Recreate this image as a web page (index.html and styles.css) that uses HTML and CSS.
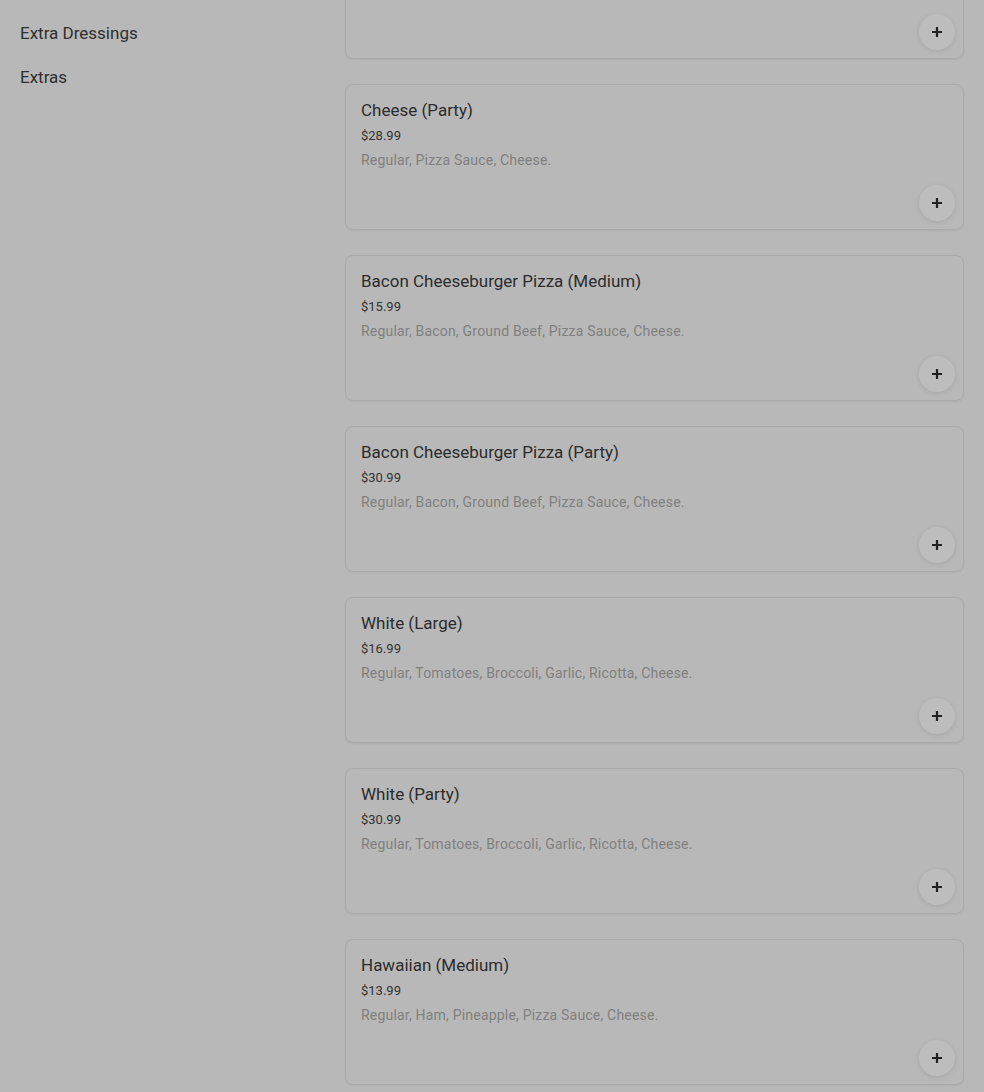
FILE: index.html
```html
<!DOCTYPE html>
<html lang="en">
<head>
    <meta charset="UTF-8">
    <meta name="viewport" content="width=device-width, initial-scale=1.0">
    <title>Menu</title>
    <link rel="stylesheet" href="styles.css">
</head>
<body>
    <div class="page">
        <!-- Category list -->
        <nav class="sidebar">
            <a href="#" class="cat-link">Extra Dressings</a>
            <a href="#" class="cat-link">Extras</a>
        </nav>

        <!-- Items (list is scrolled, first card only shows its bottom) -->
        <main class="items">
            <div class="item-card">
                <button class="btn-add" aria-label="Add">
                    <svg width="12" height="12" viewBox="0 0 12 12"><path d="M6 1v10M1 6h10" stroke="#222" stroke-width="2.2"/></svg>
                </button>
            </div>
            <div class="item-card">
                <h3 class="item-name">Cheese (Party)</h3>
                <p class="item-price">$28.99</p>
                <p class="item-desc">Regular, Pizza Sauce, Cheese.</p>
                <button class="btn-add" aria-label="Add">
                    <svg width="12" height="12" viewBox="0 0 12 12"><path d="M6 1v10M1 6h10" stroke="#222" stroke-width="2.2"/></svg>
                </button>
            </div>
            <div class="item-card">
                <h3 class="item-name">Bacon Cheeseburger Pizza (Medium)</h3>
                <p class="item-price">$15.99</p>
                <p class="item-desc">Regular, Bacon, Ground Beef, Pizza Sauce, Cheese.</p>
                <button class="btn-add" aria-label="Add">
                    <svg width="12" height="12" viewBox="0 0 12 12"><path d="M6 1v10M1 6h10" stroke="#222" stroke-width="2.2"/></svg>
                </button>
            </div>
            <div class="item-card">
                <h3 class="item-name">Bacon Cheeseburger Pizza (Party)</h3>
                <p class="item-price">$30.99</p>
                <p class="item-desc">Regular, Bacon, Ground Beef, Pizza Sauce, Cheese.</p>
                <button class="btn-add" aria-label="Add">
                    <svg width="12" height="12" viewBox="0 0 12 12"><path d="M6 1v10M1 6h10" stroke="#222" stroke-width="2.2"/></svg>
                </button>
            </div>
            <div class="item-card">
                <h3 class="item-name">White (Large)</h3>
                <p class="item-price">$16.99</p>
                <p class="item-desc">Regular, Tomatoes, Broccoli, Garlic, Ricotta, Cheese.</p>
                <button class="btn-add" aria-label="Add">
                    <svg width="12" height="12" viewBox="0 0 12 12"><path d="M6 1v10M1 6h10" stroke="#222" stroke-width="2.2"/></svg>
                </button>
            </div>
            <div class="item-card">
                <h3 class="item-name">White (Party)</h3>
                <p class="item-price">$30.99</p>
                <p class="item-desc">Regular, Tomatoes, Broccoli, Garlic, Ricotta, Cheese.</p>
                <button class="btn-add" aria-label="Add">
                    <svg width="12" height="12" viewBox="0 0 12 12"><path d="M6 1v10M1 6h10" stroke="#222" stroke-width="2.2"/></svg>
                </button>
            </div>
            <div class="item-card">
                <h3 class="item-name">Hawaiian (Medium)</h3>
                <p class="item-price">$13.99</p>
                <p class="item-desc">Regular, Ham, Pineapple, Pizza Sauce, Cheese.</p>
                <button class="btn-add" aria-label="Add">
                    <svg width="12" height="12" viewBox="0 0 12 12"><path d="M6 1v10M1 6h10" stroke="#222" stroke-width="2.2"/></svg>
                </button>
            </div>
        </main>
    </div>
</body>
</html>
```

FILE: styles.css
```css
* {
    margin: 0;
    padding: 0;
    box-sizing: border-box;
    font-family: Roboto, 'Liberation Sans', sans-serif;
}

body {
    background: #b8b8b8;
    overflow: hidden;
    height: 1092px;
}

.page {
    display: flex;
}

.sidebar {
    width: 345px;
    flex-shrink: 0;
    display: flex;
    flex-direction: column;
    gap: 22px;
    padding: 22px 20px 0;
}

.cat-link {
    color: #2f2f2f;
    text-decoration: none;
    font-size: 17px;
    line-height: 22px;
}

.items {
    width: 619px;
    display: flex;
    flex-direction: column;
    gap: 25px;
    margin-top: -87px;
}

.item-card {
    height: 146px;
    border: 1px solid #aaaaaa;
    border-radius: 8px;
    padding: 14px 15px;
    display: flex;
    flex-direction: column;
    box-shadow: 0 1px 2px rgba(0, 0, 0, 0.06);
}

.item-name {
    font-size: 17px;
    font-weight: 400;
    line-height: 22px;
    color: #2c2c2c;
}

.item-price {
    font-size: 13px;
    line-height: 18px;
    margin-top: 6px;
    color: #333;
}

.item-desc {
    font-size: 14px;
    line-height: 18px;
    margin-top: 6px;
    letter-spacing: 0.2px;
    color: #808080;
}

.btn-add {
    margin-top: auto;
    margin-right: -7px;
    margin-bottom: -6px;
    align-self: flex-end;
    width: 36px;
    height: 36px;
    border-radius: 50%;
    border: none;
    background: #bdbdbd;
    box-shadow: 0 1px 5px rgba(0, 0, 0, 0.1);
    display: flex;
    justify-content: center;
    align-items: center;
    cursor: pointer;
}
```
